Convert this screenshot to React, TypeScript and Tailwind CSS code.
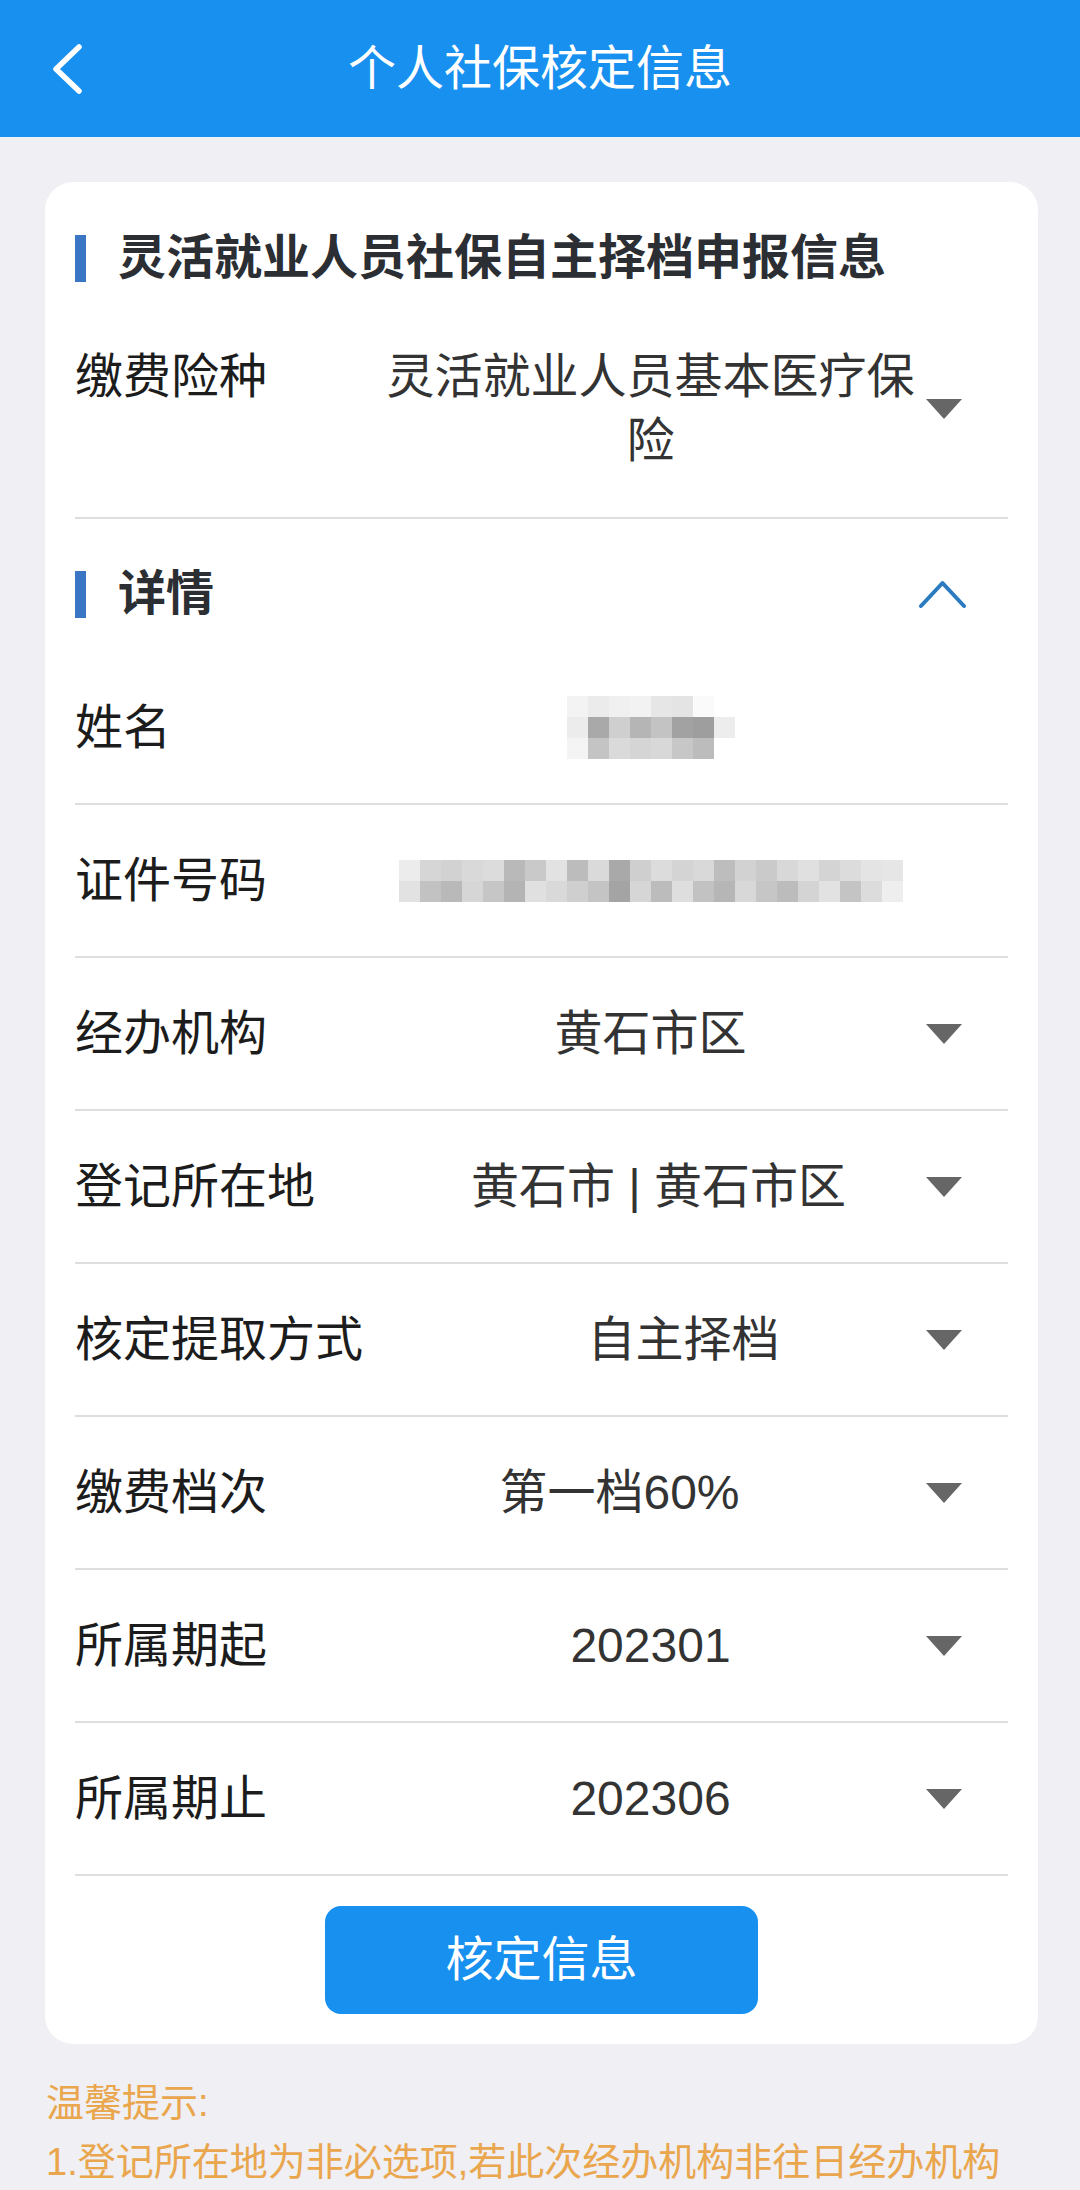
import React from 'react';

const nameMosaic = [
  ['#f3f3f3', '#ebebeb', '#f0f0f0', '#f2f2f2', '#e6e6e6', '#e4e4e4', '#fafafa', '#ffffff'],
  ['#ececec', '#a9a9a9', '#cfcfcf', '#b5b5b5', '#c3c3c3', '#a2a2a2', '#9e9e9e', '#ededed'],
  ['#f4f4f4', '#c4c4c4', '#dadada', '#d5d5d5', '#d8d8d8', '#c7c7c7', '#bcbcbc', '#ffffff'],
];

const idMosaic = [
  ['#ececec', '#d6d6d6', '#d2d2d2', '#d9d9d9', '#dcdcdc', '#b9b9b9', '#c9c9c9', '#e2e2e2', '#bcbcbc', '#dadada', '#a9a9a9', '#cfcfcf', '#dcdcdc', '#d4d4d4', '#d9d9d9', '#bdbdbd', '#d2d2d2', '#cacaca', '#d8d8d8', '#e0e0e0', '#d4d4d4', '#dcdcdc', '#e4e4e4', '#e6e6e6'],
  ['#e2e2e2', '#c2c2c2', '#b9b9b9', '#d6d6d6', '#c6c6c6', '#b4b4b4', '#e0e0e0', '#d9d9d9', '#cfcfcf', '#c4c4c4', '#a4a4a4', '#d6d6d6', '#bcbcbc', '#dedede', '#c2c2c2', '#b6b6b6', '#d8d8d8', '#c6c6c6', '#bcbcbc', '#d4d4d4', '#e2e2e2', '#c4c4c4', '#dcdcdc', '#eeeeee'],
];

function Mosaic({ cells }: { cells: string[][] }) {
  return (
    <div className="inline-flex flex-col">
      {cells.map((row, i) => (
        <div key={i} className="flex">
          {row.map((c, j) => (
            <div key={j} className="w-[21px] h-[21px]" style={{ backgroundColor: c }} />
          ))}
        </div>
      ))}
    </div>
  );
}

function Caret() {
  return (
    <svg width="36" height="20" viewBox="0 0 36 20">
      <polygon points="0,0 36,0 18,20" fill="#666666" />
    </svg>
  );
}

function Divider() {
  return <div className="h-[2px] bg-[#dedede]" />;
}

function Row({ label, children, arrow = true, valueClass = '' }: { label: string; children: React.ReactNode; arrow?: boolean; valueClass?: string }) {
  return (
    <>
      <div className="flex items-center h-[151px]">
        <div className="w-[300px] shrink-0 text-[48px] leading-[64px] text-[#1c1c1c]">{label}</div>
        <div className={`flex-1 flex justify-center text-[48px] leading-[64px] text-[#333333] ${valueClass}`}>{children}</div>
        <div className="w-[82px] shrink-0 flex items-center">{arrow && <Caret />}</div>
      </div>
      <Divider />
    </>
  );
}

export default function App() {
  return (
    <div className="w-[1080px] min-h-[2190px] bg-[#efeff4] font-['Liberation_Sans','Noto_Sans_CJK_SC',sans-serif]">
      {/* top bar */}
      <header className="h-[137px] bg-[#1790ef] flex items-center px-[50px]">
        <div className="w-[60px] shrink-0">
          <svg width="34" height="50" viewBox="0 0 34 50">
            <polyline points="29,3 6,25 29,47" fill="none" stroke="#ffffff" strokeWidth="5.5" strokeLinecap="round" strokeLinejoin="round" />
          </svg>
        </div>
        <h1 className="flex-1 text-center text-white text-[48px] leading-[64px] font-normal">个人社保核定信息</h1>
        <div className="w-[60px] shrink-0" />
      </header>

      <div className="pt-[45px] pl-[45px] pr-[42px]">
        <div className="bg-white rounded-[28px] px-[30px] pt-[52px] pb-[30px]">
          <div className="flex items-center h-[48px]">
            <div className="w-[11px] h-[47px] bg-[#3a76c4]" />
            <h2 className="ml-[32px] text-[48px] leading-[48px] font-bold text-[#2b2e33]">灵活就业人员社保自主择档申报信息</h2>
          </div>

          <div className="flex items-start pt-[63px] pb-[44px]">
            <div className="w-[300px] shrink-0 text-[48px] leading-[64px] text-[#1c1c1c]">缴费险种</div>
            <div className="flex-1 text-center text-[48px] leading-[64px] text-[#333333]">灵活就业人员基本医疗保险</div>
            <div className="w-[82px] shrink-0 flex items-center self-center"><Caret /></div>
          </div>
          <Divider />

          <div className="flex items-center h-[133px] pt-[17px]">
            <div className="w-[11px] h-[47px] bg-[#3a76c4]" />
            <h2 className="ml-[32px] text-[48px] leading-[48px] font-bold text-[#2b2e33]">详情</h2>
            <svg className="ml-auto mr-[42px]" width="47" height="30" viewBox="0 0 47 30">
              <polyline points="2,27 23.5,4 45,27" fill="none" stroke="#2a7bc0" strokeWidth="4" strokeLinecap="round" strokeLinejoin="round" />
            </svg>
          </div>

          <Row label="姓名" arrow={false}><Mosaic cells={nameMosaic} /></Row>
          <Row label="证件号码" arrow={false}><Mosaic cells={idMosaic} /></Row>
          <Row label="经办机构">黄石市区</Row>
          <Row label="登记所在地" valueClass="pl-[16px]">黄石市 | 黄石市区</Row>
          <Row label="核定提取方式" valueClass="pl-[66px]">自主择档</Row>
          <Row label="缴费档次" valueClass="pr-[62px]">第一档60%</Row>
          <Row label="所属期起">202301</Row>
          <Row label="所属期止">202306</Row>

          <button className="mt-[30px] mx-auto flex items-center justify-center w-[433px] h-[108px] rounded-[16px] bg-[#1790ef] text-white text-[48px] leading-[64px]">
            核定信息
          </button>
        </div>
      </div>

      <div className="px-[46px] pt-[30px] text-[38px] leading-[59px] text-[#e9a64d]">
        <p>温馨提示:</p>
        <p className="whitespace-nowrap">1.登记所在地为非必选项,若此次经办机构非往日经办机构</p>
      </div>
    </div>
  );
}
